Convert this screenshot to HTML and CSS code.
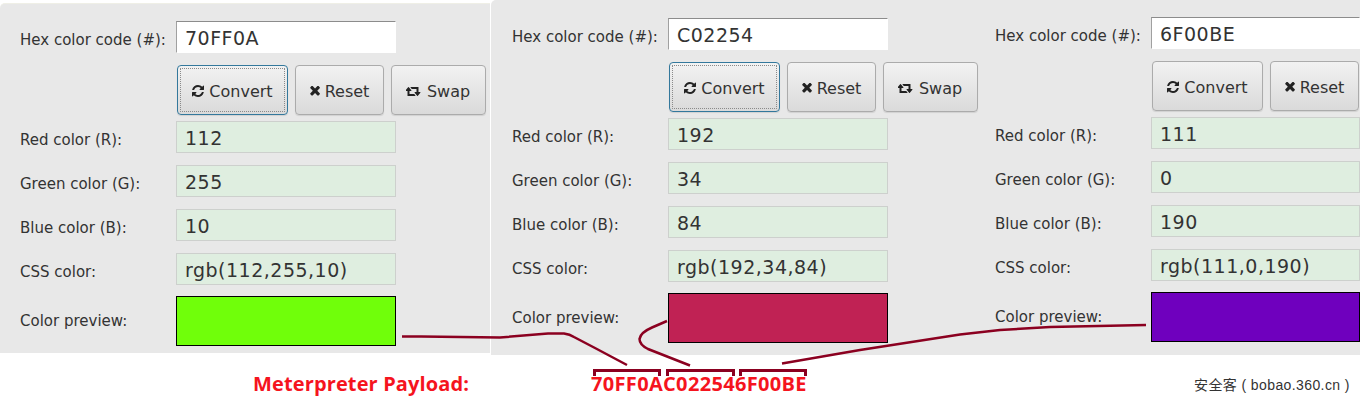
FILE: index.html
```html
<!DOCTYPE html>
<html lang="en">
<head>
<meta charset="utf-8">
<title>Hex color payload</title>
<link rel="stylesheet" href="styles.css">
</head>
<body>
<svg class="defs" aria-hidden="true">
  <symbol id="i-refresh" viewBox="128 128 1536 1536"><path d="M1639 1056q0 5-1 7-64 268-268 434.5t-478 166.5q-146 0-282.5-55t-243.5-157l-129 129q-19 19-45 19t-45-19-19-45v-448q0-26 19-45t45-19h448q26 0 45 19t19 45-19 45l-137 137q71 66 161 102t187 36q134 0 250-65t186-179q11-17 53-117 8-23 30-23h192q13 0 22.5 9.5t9.5 22.5zm25-800v448q0 26-19 45t-45 19h-448q-26 0-45-19t-19-45 19-45l138-138q-148-137-349-137-134 0-250 65t-186 179q-11 17-53 117-8 23-30 23h-199q-13 0-22.5-9.5t-9.5-22.5v-7q65-268 270-434.5t480-166.5q146 0 284 55.5t245 156.5l130-129q19-19 45-19t45 19 19 45z"/></symbol>
  <symbol id="i-times" viewBox="280 380 1220 1220"><path d="M1490 1322q0 40-28 68l-136 136q-28 28-68 28t-68-28l-294-294-294 294q-28 28-68 28t-68-28l-136-136q-28-28-28-68t28-68l294-294-294-294q-28-28-28-68t28-68l136-136q28-28 68-28t68 28l294 294 294-294q28-28 68-28t68 28l136 136q28 28 28 68t-28 68l-294 294 294 294q28 28 28 68z"/></symbol>
  <symbol id="i-retweet" viewBox="0 256 1920 1280"><path d="M1216 1504q0 13-9.500 22.500t-22.500 9.500h-960q-8 0-13.500-2t-9-7-5.500-8-3-11.500-1-11.500v-600h-192q-26 0-45-19t-19-45q0-24 15-41l320-384q19-22 49-22t49 22l320 384q15 17 15 41 0 26-19 45t-45 19h-192v384h576q16 0 25 11l160 192q7 11 7 21zm640-416q0 24-15 41l-320 384q-20 23-49 23t-49-23l-320-384q-15-17-15-41 0-26 19-45t45-19h192v-384h-576q-16 0-25-12l-160-192q-7-9-7-20 0-13 9.500-22.500t22.500-9.500h960q8 0 13.500 2t9 7 5.500 8.500 3 11.500 1 11.500v600h192q26 0 45 19t19 45z"/></symbol>
</svg>
<main class="stage">
  <section class="panel panel-a">
    <div class="row row-hex"><span class="label">Hex color code (#):</span><div class="field field-input">70FF0A</div></div>
    <div class="actions">
      <button class="btn btn-convert is-focus" type="button"><svg class="ico ico-refresh"><use href="#i-refresh"/></svg>Convert</button>
      <button class="btn btn-reset" type="button"><svg class="ico ico-times"><use href="#i-times"/></svg>Reset</button>
      <button class="btn btn-swap" type="button"><svg class="ico ico-retweet"><use href="#i-retweet"/></svg>Swap</button>
    </div>
    <div class="row"><span class="label">Red color (R):</span><div class="field field-out">112</div></div>
    <div class="row"><span class="label">Green color (G):</span><div class="field field-out">255</div></div>
    <div class="row"><span class="label">Blue color (B):</span><div class="field field-out">10</div></div>
    <div class="row"><span class="label">CSS color:</span><div class="field field-out">rgb(112,255,10)</div></div>
    <div class="row row-preview"><span class="label">Color preview:</span><div class="swatch swatch-green"></div></div>
  </section>

  <section class="panel panel-b">
    <div class="row row-hex"><span class="label">Hex color code (#):</span><div class="field field-input">C02254</div></div>
    <div class="actions">
      <button class="btn btn-convert is-focus" type="button"><svg class="ico ico-refresh"><use href="#i-refresh"/></svg>Convert</button>
      <button class="btn btn-reset" type="button"><svg class="ico ico-times"><use href="#i-times"/></svg>Reset</button>
      <button class="btn btn-swap" type="button"><svg class="ico ico-retweet"><use href="#i-retweet"/></svg>Swap</button>
    </div>
    <div class="row"><span class="label">Red color (R):</span><div class="field field-out">192</div></div>
    <div class="row"><span class="label">Green color (G):</span><div class="field field-out">34</div></div>
    <div class="row"><span class="label">Blue color (B):</span><div class="field field-out">84</div></div>
    <div class="row"><span class="label">CSS color:</span><div class="field field-out">rgb(192,34,84)</div></div>
    <div class="row row-preview"><span class="label">Color preview:</span><div class="swatch swatch-red"></div></div>
  </section>

  <section class="panel panel-c">
    <div class="row row-hex"><span class="label">Hex color code (#):</span><div class="field field-input">6F00BE</div></div>
    <div class="actions">
      <button class="btn btn-convert" type="button"><svg class="ico ico-refresh"><use href="#i-refresh"/></svg>Convert</button>
      <button class="btn btn-reset" type="button"><svg class="ico ico-times"><use href="#i-times"/></svg>Reset</button>
    </div>
    <div class="row"><span class="label">Red color (R):</span><div class="field field-out">111</div></div>
    <div class="row"><span class="label">Green color (G):</span><div class="field field-out">0</div></div>
    <div class="row"><span class="label">Blue color (B):</span><div class="field field-out">190</div></div>
    <div class="row"><span class="label">CSS color:</span><div class="field field-out">rgb(111,0,190)</div></div>
    <div class="row row-preview"><span class="label">Color preview:</span><div class="swatch swatch-purple"></div></div>
  </section>

  <svg class="wires" viewBox="0 0 1364 402" aria-hidden="true">
    <g class="wire">
      <path d="M402 336.500H421L500 337.500L548 333.500H564C568 334 571 335 574 337L595 348L627 365"/>
      <path d="M667 321L652 327.500C644 331 640 335 639.500 339C639.500 343 642 346 648 349L690 365.500"/>
      <path d="M782 363.500L860 350L960 334.500L1000 330L1050 327L1146 325"/>
    </g>
    <g class="wire wire-bracket">
      <path d="M594.500 376V370.500H659.500V376"/>
      <path d="M667.500 376V370.500H733.500V376"/>
      <path d="M740.500 376V370.500H805.500V376"/>
    </g>
  </svg>

  <p class="caption caption-title">Meterpreter Payload:</p>
  <p class="caption caption-code">70FF0AC022546F00BE</p>
  <p class="credit">安全客 ( bobao.360.cn )</p>
</main>
</body>
</html>
```
FILE: styles.css
```css
* { box-sizing: border-box; }

html, body {
  margin: 0;
  padding: 0;
  background: #fff;
}

body {
  font-family: "DejaVu Sans", sans-serif;
  color: #333;
  overflow: hidden;
}

.defs { position: absolute; width: 0; height: 0; }

.stage {
  position: relative;
  width: 1364px;
  height: 402px;
  overflow: hidden;
}

/* The three panels are pasted screenshots on a free canvas */
.panel {
  position: absolute;
  overflow: hidden;
  display: flex;
  flex-direction: column;
  background: #e8e8e8;
  border-radius: 5px 0 0 0;
}

.panel-a { left: 0; top: 3px; width: 490px; height: 350px; padding: 18px 0 0 20px; border-top: 1px solid #efefe6; }
.panel-b { left: 491px; top: 0; width: 488px; height: 355px; padding: 18px 0 0 21px; }
.panel-c { left: 979px; top: 0; width: 381px; height: 355px; padding: 17px 0 0 16px; border-radius: 0; }

.panel-a .row-hex { margin-top: -1px; }

.row {
  display: flex;
  align-items: center;
  margin-bottom: 12px;
}

.row-hex { margin-bottom: 12px; }
.row-preview { margin-top: -1px; margin-bottom: 0; }

.label {
  flex: 0 0 156px;
  font-size: 15px;
  line-height: 20px;
  padding-top: 5px;
}

.row-preview .label { padding-top: 0; }

.field {
  width: 220px;
  height: 32px;
  padding: 1px 8px 0;
  font-size: 19px;
  letter-spacing: .5px;
  line-height: 30px;
  border: 1px solid #ccc;
  color: #333;
  white-space: nowrap;
}

.field-input {
  background: #fff;
  border-color: #fff;
  border-top-color: #8c8c8c;
  border-left-color: #a0a0a0;
}

.field-out {
  background: #dfeee0;
  border-color: #cdd0cd;
}

.actions {
  display: flex;
  gap: 7px;
  margin: 0 0 6px 157px;
}

.btn {
  display: flex;
  align-items: center;
  justify-content: center;
  flex: none;
  height: 50px;
  padding: 2px 0 0;
  font-family: inherit;
  font-size: 16px;
  color: #333;
  background: linear-gradient(#f2f2f2, #dadada);
  border: 1px solid #ababab;
  border-radius: 4px;
  box-shadow: 0 1px 1px rgba(0, 0, 0, .1);
}

.btn-convert { width: 111px; }
.btn-reset { width: 89px; }
.btn-swap { width: 95px; }

.is-focus {
  border-color: #33789c;
  outline: 1px dotted #8a8a8a;
  outline-offset: -4px;
}

.ico { display: block; flex: none; fill: #222; }
.ico-refresh { width: 12px; height: 12px; margin-right: 5px; }
.ico-times { width: 10px; height: 10px; margin-right: 5px; }
.ico-retweet { width: 15px; height: 10px; margin-right: 6px; }

.btn-swap .ico { margin-left: -1px; }

.swatch {
  width: 220px;
  height: 50px;
  border: 1px solid #000;
}
.swatch-green { background: #70ff0a; }
.swatch-red { background: #c02254; }
.swatch-purple { background: #6f00be; }

.wires {
  position: absolute;
  left: 0;
  top: 0;
  width: 1364px;
  height: 402px;
  pointer-events: none;
}

.wire path {
  fill: none;
  stroke: #8b0020;
  stroke-width: 2.5;
}

.wire-bracket path { stroke-width: 3; }

.caption {
  position: absolute;
  margin: 0;
  top: 370px;
  font-family: "Open Sans", sans-serif;
  font-weight: 700;
  font-size: 20px;
  line-height: 28px;
  color: #f5141e;
  white-space: nowrap;
}

.caption-title { left: 253px; letter-spacing: .13px; }
.caption-code { left: 591px; letter-spacing: .33px; }

.credit {
  position: absolute;
  margin: 0;
  left: 1194px;
  top: 376px;
  font-family: "Liberation Sans", "Noto Sans CJK SC", sans-serif;
  font-size: 14px;
  letter-spacing: .4px;
  line-height: 18px;
  color: #333;
  white-space: nowrap;
}
```
